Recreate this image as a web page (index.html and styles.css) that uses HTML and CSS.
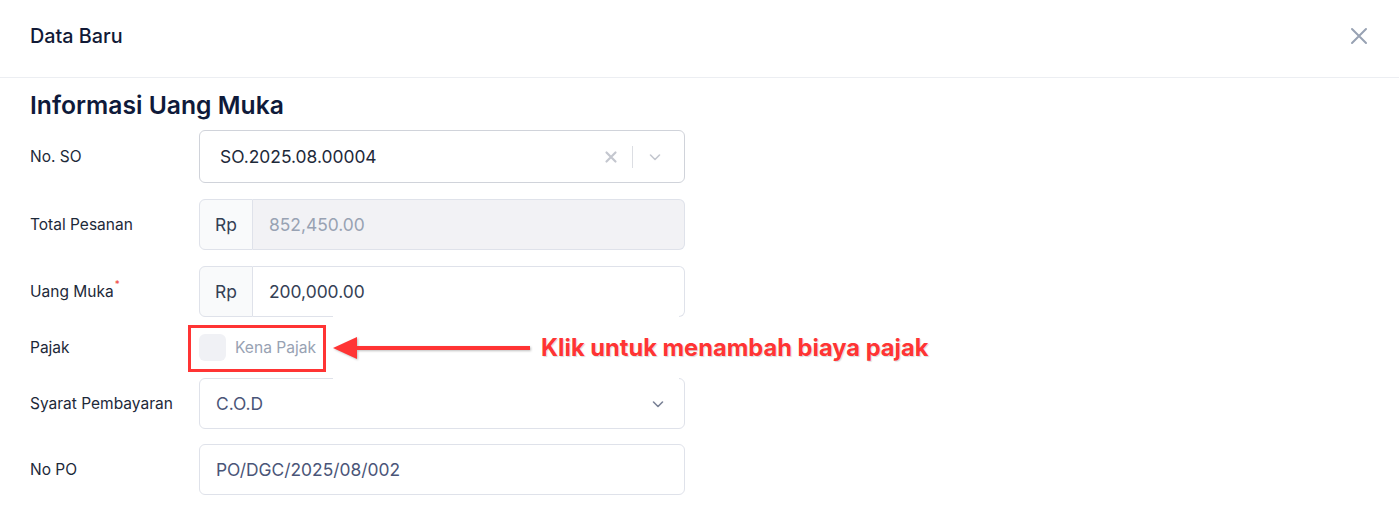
FILE: index.html
```html
<!DOCTYPE html>
<html lang="id">
<head>
<meta charset="utf-8">
<title>Data Baru</title>
<link rel="stylesheet" href="styles.css">
</head>
<body>
<div class="modal">
  <header class="modal-header">
    <h1 class="modal-title">Data Baru</h1>
    <button class="close-btn" aria-label="Tutup">
      <svg width="18" height="18" viewBox="0 0 18 18"><path d="M2 2 L16 16 M16 2 L2 16" stroke="#98a2b3" stroke-width="2" stroke-linecap="round"/></svg>
    </button>
  </header>
  <section class="modal-body">
    <h2 class="section-title">Informasi Uang Muka</h2>
    <div class="form">
      <div class="row row-so">
        <label class="label">No. SO</label>
        <div class="control select">
          <span class="value dark">SO.2025.08.00004</span>
          <span class="select-icons">
            <svg class="clear" width="14" height="14" viewBox="0 0 14 14"><path d="M2.5 2.5 L11.5 11.5 M11.5 2.5 L2.5 11.5" stroke="#c4c7cf" stroke-width="2.2" stroke-linecap="round"/></svg>
            <span class="divider"></span>
            <svg class="chev" width="14" height="14" viewBox="0 0 14 14"><path d="M2.5 5 L7 9.5 L11.5 5" fill="none" stroke="#c4c7cf" stroke-width="1.6" stroke-linecap="round" stroke-linejoin="round"/></svg>
          </span>
        </div>
      </div>
      <div class="row">
        <label class="label">Total Pesanan</label>
        <div class="control group">
          <span class="addon">Rp</span>
          <span class="input disabled">852,450.00</span>
        </div>
      </div>
      <div class="row">
        <label class="label">Uang Muka<sup class="req">*</sup></label>
        <div class="control group">
          <span class="addon">Rp</span>
          <span class="input">200,000.00</span>
        </div>
      </div>
      <div class="row row-check">
        <label class="label">Pajak</label>
        <div class="check">
          <span class="box"></span>
          <span class="check-text">Kena Pajak</span>
        </div>
      </div>
      <div class="row">
        <label class="label">Syarat Pembayaran</label>
        <div class="control select plain">
          <span class="value">C.O.D</span>
          <svg class="chev" width="14" height="14" viewBox="0 0 14 14"><path d="M2.5 5 L7 9.5 L11.5 5" fill="none" stroke="#7a8296" stroke-width="1.6" stroke-linecap="round" stroke-linejoin="round"/></svg>
        </div>
      </div>
      <div class="row row-last">
        <label class="label">No PO</label>
        <div class="control plain">
          <span class="value">PO/DGC/2025/08/002</span>
        </div>
      </div>
    </div>
  </section>

  <div class="anno-patch"></div>
  <div class="anno-box"></div>
  <svg class="anno-arrow" width="200" height="30" viewBox="0 0 200 30">
    <path d="M0 15 L24 4 L24 26 Z" fill="#ff3434"/>
    <rect x="22" y="13" width="175" height="4" fill="#ff3434"/>
  </svg>
  <div class="anno-text">Klik untuk menambah biaya pajak</div>
</div>
</body>
</html>
```

FILE: styles.css
```css
* { box-sizing: border-box; }
html, body { margin: 0; padding: 0; background: #ffffff; }
body {
  font-family: Inter, "Noto Sans", "Liberation Sans", sans-serif;
  color: #1d2939;
}
.modal { position: relative; width: 1399px; height: 507px; overflow: hidden; }

.modal-header {
  height: 78px;
  border-bottom: 1px solid #eceef2;
  display: flex;
  align-items: center;
  justify-content: space-between;
  padding: 0 30px 6px 30px;
}
.modal-title {
  margin: 0;
  font-size: 19.8px;
  font-weight: 500;
  color: #111936;
}
.close-btn {
  border: 0;
  background: none;
  padding: 0;
  margin-right: 0;
  width: 20px;
  height: 20px;
  display: flex;
  align-items: center;
  justify-content: center;
}

.modal-body { padding: 12px 30px 0 30px; }
.section-title {
  margin: 0;
  font-size: 24.7px;
  line-height: 30px;
  font-weight: 600;
  color: #0f1a3a;
}
.form {
  margin-top: 10px;
  display: flex;
  flex-direction: column;
  gap: 16px;
}
.row {
  display: grid;
  grid-template-columns: 169px 486px;
  align-items: center;
  height: 51px;
}
.row-so { height: 53px; }
.row-check { height: 29px; }
.row-last { margin-top: -1px; }

.label {
  font-size: 15.5px;
  color: #1d2939;
}
.req {
  color: #f04438;
  font-size: 10px;
  vertical-align: top;
  position: relative;
  top: -4px;
  margin-left: 1px;
}

.control {
  height: 100%;
  border: 1px solid #dfe2ea;
  border-radius: 6px;
  display: flex;
  align-items: center;
  font-size: 17.4px;
}
.select {
  border-color: #d0d3da;
  padding: 0 22px 0 20px;
  justify-content: space-between;
}
.select.plain { border-color: #dfe2ea; padding-left: 16px; padding-right: 19px; }
.plain { padding-left: 16px; }
.value { color: #4a5578; }
.value.dark { color: #1d2939; }
.select-icons { display: flex; align-items: center; }
.select-icons .clear { margin-right: 14px; }
.divider { width: 1px; height: 22px; background: #dcdee3; margin-right: 15px; }

.group { border: 0; }
.addon {
  width: 54px;
  height: 100%;
  border: 1px solid #dfe2ea;
  border-radius: 6px 0 0 6px;
  background: #f9fafb;
  display: flex;
  align-items: center;
  justify-content: center;
  color: #344054;
}
.input {
  flex: 1;
  height: 100%;
  border: 1px solid #dfe2ea;
  border-left: 0;
  border-radius: 0 6px 6px 0;
  display: flex;
  align-items: center;
  padding-left: 16px;
  color: #344054;
}
.input.disabled { background: #f2f2f5; color: #98a2b3; }

.check { display: flex; align-items: center; }
.box {
  width: 27px;
  height: 27px;
  border-radius: 6px;
  background: #f0f1f5;
}
.check-text { margin-left: 9px; font-size: 15.6px; color: #98a2b3; }

.anno-patch {
  position: absolute;
  left: 333px; top: 316px;
  width: 346px; height: 64px;
  background: #ffffff;
}
.anno-box {
  position: absolute;
  left: 188px; top: 325px;
  width: 138px; height: 47px;
  border: 3px solid #ff3434;
}
.anno-arrow {
  position: absolute;
  left: 333px; top: 333px;
  filter: drop-shadow(1px 1px 1px rgba(0,0,0,0.25));
}
.anno-text {
  position: absolute;
  left: 541px; top: 333px;
  font-size: 23.7px;
  line-height: 30px;
  font-weight: 700;
  color: #ff3434;
  text-shadow: 1px 1px 1px rgba(0,0,0,0.15);
}
```
